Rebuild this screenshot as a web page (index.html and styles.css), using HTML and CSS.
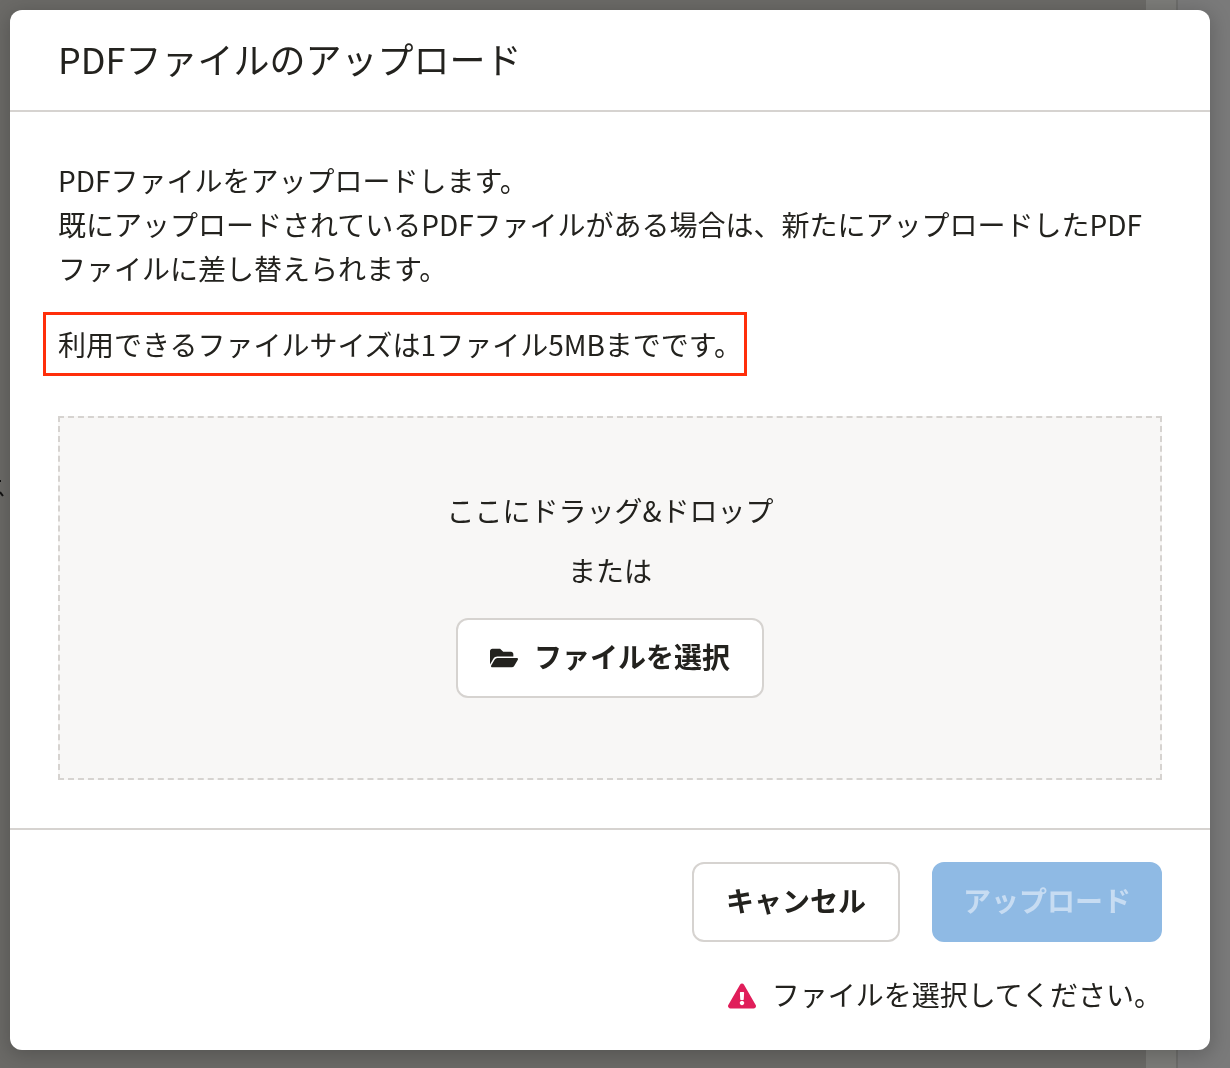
FILE: index.html
```html
<!DOCTYPE html>
<html lang="ja">
<head>
<meta charset="utf-8">
<meta name="viewport" content="width=device-width, initial-scale=1">
<title>PDFファイルのアップロード</title>
<link rel="stylesheet" href="styles.css">
</head>
<body>
<div class="backdrop" aria-hidden="true">
  <div class="backdrop-page">
    <svg class="backdrop-mark" viewBox="0 0 4 20" width="4" height="20"><path d="M0 1h1M0 12l3 4" fill="none" stroke="#111" stroke-width="2"/></svg>
  </div>
  <div class="backdrop-gutter"></div>
  <div class="backdrop-rail"></div>
</div>
<main class="dialog" role="dialog" aria-modal="true" aria-labelledby="dialog-title">
  <header class="dialog-header">
    <h1 class="dialog-title" id="dialog-title">PDFファイルのアップロード</h1>
  </header>
  <div class="dialog-body">
    <p class="text">PDFファイルをアップロードします。<br>既にアップロードされているPDFファイルがある場合は、新たにアップロードしたPDFファイルに差し替えられます。</p>
    <p class="text size-note">利用できるファイルサイズは1ファイル5MBまでです。</p>
    <div class="dropzone">
      <p class="text">ここにドラッグ&amp;ドロップ</p>
      <p class="text">または</p>
      <button class="button button-select" type="button">
        <svg class="icon" viewBox="0 0 576 512" width="28" height="28" aria-hidden="true"><path fill="currentColor" d="M572.694 292.093L500.27 416.248A63.997 63.997 0 0 1 444.989 448H45.025c-18.523 0-30.064-20.093-20.731-36.093l72.424-124.155A64 64 0 0 1 152 256h399.964c18.523 0 30.064 20.093 20.73 36.093zM152 224h328v-48c0-26.51-21.49-48-48-48H272l-64-64H48C21.49 64 0 85.49 0 112v278.046l69.077-118.418C86.214 242.25 117.989 224 152 224z"/></svg>
        <span class="text">ファイルを選択</span>
      </button>
    </div>
  </div>
  <footer class="dialog-footer">
    <div class="actions">
      <button class="button" type="button"><span class="text">キャンセル</span></button>
      <button class="button button-primary" type="button" disabled><span class="text">アップロード</span></button>
    </div>
    <p class="message" role="alert">
      <svg class="icon icon-alert" viewBox="0 0 576 512" width="28" height="28" aria-hidden="true"><path fill="currentColor" d="M569.517 440.013C587.975 472.007 564.806 512 527.94 512H48.054c-36.937 0-59.999-40.055-41.577-71.987L246.423 23.985c18.467-32.009 64.72-31.951 83.154 0l239.94 416.028zM288 354c-25.405 0-46 20.595-46 46s20.595 46 46 46 46-20.595 46-46-20.595-46-46-46zm-43.673-165.346l7.418 136c.347 6.364 5.609 11.346 11.982 11.346h48.546c6.373 0 11.635-4.982 11.982-11.346l7.418-136c.375-6.874-5.098-12.654-11.982-12.654h-63.383c-6.884 0-12.356 5.78-11.981 12.654z"/></svg>
      <span class="text">ファイルを選択してください。</span>
    </p>
  </footer>
</main>
</body>
</html>
```
FILE: styles.css
```css
* {
  box-sizing: border-box;
}

body {
  margin: 0;
  padding: 10px 20px 18px 10px;
  color: #23221e;
  font-family: "Noto Sans CJK JP", sans-serif;
  font-size: 28px;
  line-height: 44px;
}

.backdrop {
  position: fixed;
  inset: 0;
  z-index: -1;
  display: flex;
  background: #7a7a7a;
}

.backdrop-page {
  position: relative;
  flex: 1;
  background: #6b6a67;
}

.backdrop-mark {
  position: absolute;
  left: 0;
  top: 480px;
}

.backdrop-gutter {
  width: 32px;
  background: #7c7c79;
  border-right: 2px solid #6d6d6b;
}

.backdrop-rail {
  width: 52px;
}

.dialog {
  border-radius: 12px;
  background: #fff;
  box-shadow: 0 4px 20px 2px rgba(0, 0, 0, 0.2);
}

.dialog-header {
  padding: 22px 48px 26px;
  border-bottom: 2px solid #d6d3d0;
}

.dialog-title {
  margin: 0;
  font-size: 36px;
  font-weight: 400;
  line-height: 52px;
}

.dialog-body {
  display: flex;
  flex-direction: column;
  padding: 48px;
}

/* The CJK face sits low in its line box, so text is raised to look centred. */
.text {
  margin: -2px 0 2px;
}

.size-note {
  width: fit-content;
  margin: 20px -15px 40px;
  padding: 7px 2px 7px 12px;
  border: 3px solid #ff2f0a;
}

.dropzone {
  display: flex;
  flex-direction: column;
  align-items: center;
  gap: 16px;
  padding: 72px 48px 80px;
  border: 2px dashed #d6d3d0;
  background: #f8f7f6;
}

.button {
  display: inline-flex;
  align-items: center;
  justify-content: center;
  gap: 16px;
  height: 80px;
  padding: 0 32px;
  border: 2px solid #d6d3d0;
  border-radius: 12px;
  background: #fff;
  color: inherit;
  font: inherit;
  font-weight: 700;
}

.button-select {
  margin-top: 8px;
}

.button-primary {
  padding: 0 29px;
  border-color: #8fbae4;
  background: #8fbae4;
  color: #c7dcf2;
}

.icon {
  flex: none;
}

.icon-alert {
  color: #e01e5a;
}

.dialog-footer {
  padding: 32px 48px;
  border-top: 2px solid #d6d3d0;
}

.actions {
  display: flex;
  justify-content: flex-end;
  gap: 32px;
}

.message {
  display: flex;
  align-items: center;
  justify-content: flex-end;
  gap: 16px;
  margin: 32px 0 0;
}
```
